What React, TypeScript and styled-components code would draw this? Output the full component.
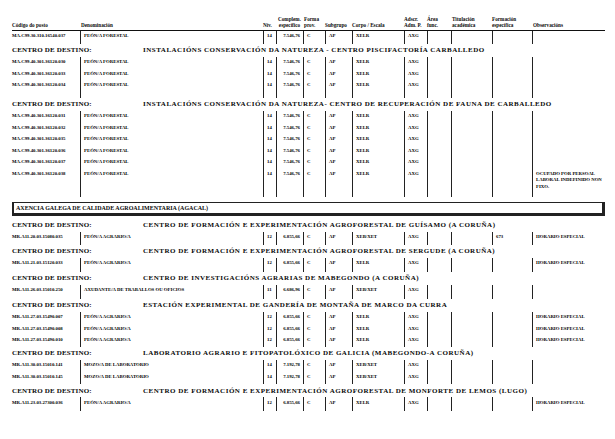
import React from 'react';
import styled, { createGlobalStyle } from 'styled-components';

const Global = createGlobalStyle`
  html, body { margin: 0; padding: 0; background: #ffffff; }
  body { font-family: "Liberation Serif", "Times New Roman", serif; color: #0a0a0a; }
`;

const COLS = '68px 183px 13px 27px 22px 27px 52px 23px 24px 41px 40px 73px';

const Page = styled.div`
  width: 593px;
  padding: 15.75px 0 0 12px;
  font-weight: bold;
`;

const HeaderRow = styled.div`
  display: grid;
  grid-template-columns: ${COLS};
  border-bottom: 1px solid #111;
  padding-bottom: 1px;
  font-size: 5.2px;
  line-height: 6.5px;
`;

const HeadCell = styled.div<{ $center?: boolean; $pad?: number }>`
  display: flex;
  flex-direction: column;
  justify-content: flex-end;
  align-items: ${(p) => (p.$center ? 'center' : 'flex-start')};
  padding-left: ${(p) => p.$pad ?? 1}px;
  white-space: nowrap;
`;

const Row = styled.div<{ $tail?: number }>`
  display: grid;
  grid-template-columns: ${COLS};
  font-size: 4.8px;
  line-height: 6.5px;
  color: #000;
  & > div {
    padding-bottom: ${(p) => 2.5 + (p.$tail ?? 0)}px;
  }
`;

const Cell = styled.div<{ $line?: boolean; $right?: boolean; $pad?: number; $wrap?: boolean }>`
  border-left: ${(p) => (p.$line ? '1px solid #222' : 'none')};
  padding-top: 2.5px;
  padding-left: ${(p) => p.$pad ?? 3}px;
  padding-right: ${(p) => (p.$right ? 3 : 0)}px;
  text-align: ${(p) => (p.$right ? 'right' : 'left')};
  white-space: ${(p) => (p.$wrap ? 'normal' : 'nowrap')};
  overflow: visible;
`;

const Heading = styled.div`
  display: flex;
  align-items: center;
  height: 13px;
  font-size: 7px;
  white-space: nowrap;
`;

const HeadingLabel = styled.span`
  flex: none;
  width: 131px;
  letter-spacing: 0.15px;
`;

const HeadingTitle = styled.span`
  letter-spacing: 0.5px;
`;

const AgencyBox = styled.div`
  margin: 5px 0 3px;
  height: 10px;
  border: 1px solid #222;
  border-left-width: 2px;
  border-right-width: 3px;
  border-bottom-width: 3px;
  padding-left: 2px;
  font-size: 6px;
  line-height: 10px;
  white-space: nowrap;
`;

type Post = {
  code: string;
  den: string;
  niv: string;
  comp: string;
  corpo: string;
  form?: string;
  obs?: string;
};

type Section = { title?: string; posts: Post[]; tail: number };

const pf = (code: string, obs?: string): Post => ({
  code,
  den: 'PEÓN/A FORESTAL',
  niv: '14',
  comp: '7.546,76',
  corpo: 'XELR',
  obs,
});

const pa = (code: string, corpo: string, obs?: string, form?: string): Post => ({
  code,
  den: 'PEÓN/A AGRARIO/A',
  niv: '12',
  comp: '6.855,66',
  corpo,
  obs,
  form,
});

const before: Section[] = [
  { posts: [pf('MA.C99.30.310.16540.037')], tail: 1.5 },
  {
    title: 'INSTALACIÓNS CONSERVACIÓN DA NATUREZA - CENTRO PISCIFACTORÍA CARBALLEDO',
    posts: [
      pf('MA.C99.40.301.36120.030'),
      pf('MA.C99.40.301.36120.033'),
      pf('MA.C99.40.301.36120.034'),
    ],
    tail: 6.5,
  },
  {
    title: 'INSTALACIÓNS CONSERVACIÓN DA NATUREZA- CENTRO DE RECUPERACIÓN DE FAUNA DE CARBALLEDO',
    posts: [
      pf('MA.C99.40.301.36120.031'),
      pf('MA.C99.40.301.36120.032'),
      pf('MA.C99.40.301.36120.035'),
      pf('MA.C99.40.301.36120.036'),
      pf('MA.C99.40.301.36120.037'),
      pf('MA.C99.40.301.36120.038', 'OCUPADO POR PERSOAL LABORAL INDEFINIDO NON FIXO.'),
    ],
    tail: 4,
  },
];

const HE = 'HORARIO ESPECIAL';

const after: Section[] = [
  {
    title: 'CENTRO DE FORMACIÓN E EXPERIMENTACIÓN AGROFORESTAL DE GUÍSAMO (A CORUÑA)',
    posts: [pa('MR.A11.20.03.15080.035', 'XEB/XET', HE, '673')],
    tail: 1.6,
  },
  {
    title: 'CENTRO DE FORMACIÓN E EXPERIMENTACIÓN AGROFORESTAL DE SERGUDE (A CORUÑA)',
    posts: [pa('MR.A11.21.03.15120.033', 'XELR', HE)],
    tail: 2.4,
  },
  {
    title: 'CENTRO DE INVESTIGACIÓNS AGRARIAS DE MABEGONDO (A CORUÑA)',
    posts: [
      {
        code: 'MR.A11.26.03.15010.250',
        den: 'AXUDANTE/A DE TRABALLOS OU OFICIOS',
        niv: '11',
        comp: '6.686,96',
        corpo: 'XEB/XET',
      },
    ],
    tail: 2.4,
  },
  {
    title: 'ESTACIÓN EXPERIMENTAL DE GANDERÍA DE MONTAÑA DE MARCO DA CURRA',
    posts: [
      pa('MR.A11.27.03.15490.007', 'XELR', HE),
      pa('MR.A11.27.03.15490.008', 'XELR', HE),
      pa('MR.A11.27.03.15490.010', 'XELR', HE),
    ],
    tail: 0.6,
  },
  {
    title: 'LABORATORIO AGRARIO E FITOPATOLÓXICO DE GALICIA (MABEGONDO-A CORUÑA)',
    posts: [
      {
        code: 'MR.A11.30.03.15010.141',
        den: 'MOZO/A DE LABORATORIO',
        niv: '14',
        comp: '7.192,78',
        corpo: 'XEB/XET',
      },
      {
        code: 'MR.A11.30.03.15010.145',
        den: 'MOZO/A DE LABORATORIO',
        niv: '14',
        comp: '7.192,78',
        corpo: 'XEB/XET',
      },
    ],
    tail: 1.6,
  },
  {
    title: 'CENTRO DE FORMACIÓN E EXPERIMENTACIÓN AGROFORESTAL DE MONFORTE DE LEMOS (LUGO)',
    posts: [pa('MR.A11.23.03.27300.036', 'XELR', HE)],
    tail: 2,
  },
];

const PostRow: React.FC<{ post: Post; tail: number }> = ({ post, tail }) => (
  <Row $tail={tail}>
    <Cell $pad={0}>{post.code}</Cell>
    <Cell $line>{post.den}</Cell>
    <Cell $line>{post.niv}</Cell>
    <Cell $line $right $pad={0}>{post.comp}</Cell>
    <Cell $line>C</Cell>
    <Cell $line>AP</Cell>
    <Cell $line>{post.corpo}</Cell>
    <Cell $line>AXG</Cell>
    <Cell $line />
    <Cell $line />
    <Cell $line>{post.form ?? ''}</Cell>
    <Cell $line $wrap>{post.obs ?? ''}</Cell>
  </Row>
);

const SectionBlock: React.FC<{ section: Section }> = ({ section }) => (
  <>
    {section.title && (
      <Heading>
        <HeadingLabel>CENTRO DE DESTINO:</HeadingLabel>
        <HeadingTitle>{section.title}</HeadingTitle>
      </Heading>
    )}
    {section.posts.map((p, i) => (
      <PostRow key={p.code} post={p} tail={i === section.posts.length - 1 ? section.tail : 0} />
    ))}
  </>
);

export default function App() {
  return (
    <>
      <Global />
      <Page>
        <HeaderRow>
          <HeadCell $pad={0}>Código do posto</HeadCell>
          <HeadCell>Denominación</HeadCell>
          <HeadCell $pad={0}>Nív.</HeadCell>
          <HeadCell $center $pad={0}>
            <span>Complem.</span>
            <span>específico</span>
          </HeadCell>
          <HeadCell $pad={1}>
            <span>Forma</span>
            <span>prov.</span>
          </HeadCell>
          <HeadCell $pad={0}>Subgrupo</HeadCell>
          <HeadCell $pad={0}>Corpo / Escala</HeadCell>
          <HeadCell $pad={0}>
            <span>Adscr.</span>
            <span>Adm. P.</span>
          </HeadCell>
          <HeadCell $pad={0}>
            <span>Área</span>
            <span>func.</span>
          </HeadCell>
          <HeadCell>
            <span>Titulación</span>
            <span>académica</span>
          </HeadCell>
          <HeadCell $pad={0}>
            <span>Formación</span>
            <span>específica</span>
          </HeadCell>
          <HeadCell>Observacións</HeadCell>
        </HeaderRow>
        {before.map((s, i) => (
          <SectionBlock key={i} section={s} />
        ))}
        <AgencyBox>AXENCIA GALEGA DE CALIDADE AGROALIMENTARIA (AGACAL)</AgencyBox>
        {after.map((s, i) => (
          <SectionBlock key={i} section={s} />
        ))}
      </Page>
    </>
  );
}
